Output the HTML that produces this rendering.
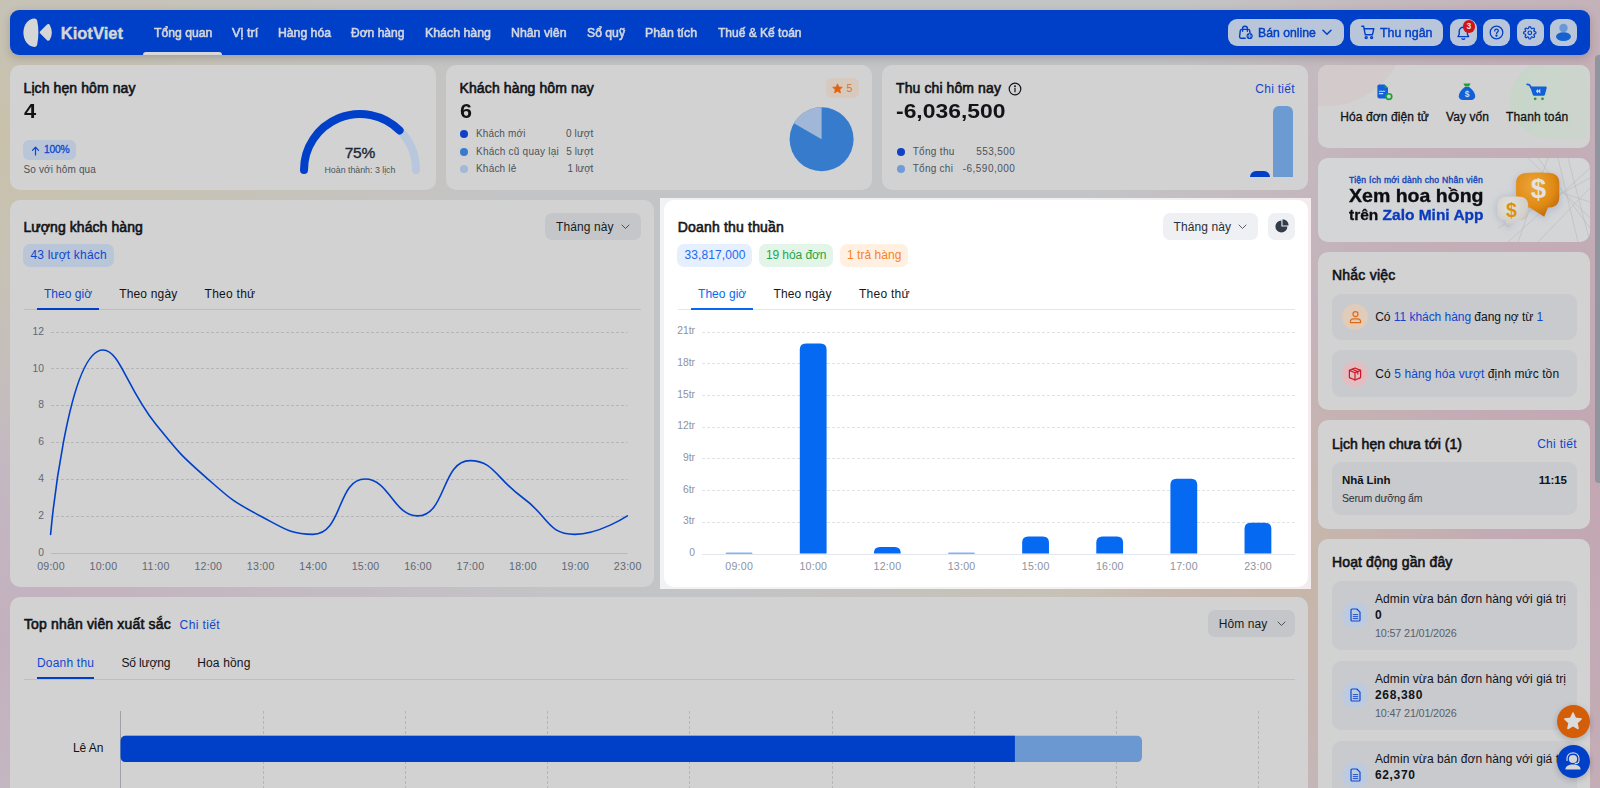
<!DOCTYPE html>
<html lang="vi"><head><meta charset="utf-8"><title>KiotViet - Tổng quan</title>
<style>
html,body{margin:0;padding:0}
body{width:1600px;height:788px;overflow:hidden;position:relative;font-family:"Liberation Sans", sans-serif;background:radial-gradient(ellipse 200px 260px at 1290px 570px,#c7b7a8 0%,rgba(199,183,168,0) 100%),radial-gradient(ellipse 520px 330px at 0px 140px,#c9c1ab 0%,rgba(201,193,171,0) 100%),radial-gradient(ellipse 560px 420px at 0px 640px,#c3b0be 0%,rgba(195,176,190,0) 100%),radial-gradient(ellipse 560px 800px at 1640px 480px,#c2a6b1 0%,#c4b0b8 55%,rgba(196,176,184,0) 100%),radial-gradient(ellipse 420px 200px at 1150px 620px,#c8c0b0 0%,rgba(200,192,176,0) 100%),#c3c4c6;}
.t{position:absolute;white-space:nowrap;display:block}
svg{position:absolute;overflow:visible}
b{font-weight:700}

</style></head><body>
<div style="position:absolute;left:10px;top:10px;width:1580px;height:45px;background:#0040c8;border-radius:9px;box-shadow:0 3px 8px rgba(40,40,60,.22)"></div>
<svg style="left:23px;top:18px" width="30" height="29" viewBox="0 0 30 29">
<path d="M11.500 .4 C5 .4 .4 7 .4 14.600 C.4 22.300 5 28.900 11.500 28.900 C13 28.900 13.800 28 14.200 26.500 C15.800 19 15.800 10 14.200 2.800 C13.800 1.300 13 .4 11.500 .4 Z" fill="#d6d6d6"/>
<path d="M17.300 13.200 L24 6.600 C25 5.600 26.400 5.900 26.900 7.200 C29.500 12 29.500 17 26.900 21.600 C26.400 22.900 25 23.200 24 22.200 L17.300 15.600 C16.600 14.900 16.600 13.900 17.300 13.200 Z" fill="#d6d6d6"/>
</svg>
<span class="t" style="left:60.70px;top:24.63px;font-size:16.5px;line-height:16.5px;color:#d6d6d6;font-weight:700;letter-spacing:0.032px;-webkit-text-stroke:0.4px #d6d6d6;">KiotViet</span>
<span class="t" style="left:153.75px;top:26.00px;font-size:13px;line-height:13px;color:#d6d6d6;transform:scaleX(0.9369);transform-origin:left center;-webkit-text-stroke:0.6px #d6d6d6;">Tổng quan</span>
<span class="t" style="left:232.00px;top:26.00px;font-size:13px;line-height:13px;color:#d3d6de;transform:scaleX(0.9819);transform-origin:left center;-webkit-text-stroke:0.6px #d3d6de;">Vị trí</span>
<span class="t" style="left:278.25px;top:26.00px;font-size:13px;line-height:13px;color:#d3d6de;transform:scaleX(0.9399);transform-origin:left center;-webkit-text-stroke:0.6px #d3d6de;">Hàng hóa</span>
<span class="t" style="left:350.75px;top:26.00px;font-size:13px;line-height:13px;color:#d3d6de;transform:scaleX(0.9274);transform-origin:left center;-webkit-text-stroke:0.6px #d3d6de;">Đơn hàng</span>
<span class="t" style="left:424.50px;top:26.00px;font-size:13px;line-height:13px;color:#d3d6de;transform:scaleX(0.9509);transform-origin:left center;-webkit-text-stroke:0.6px #d3d6de;">Khách hàng</span>
<span class="t" style="left:510.75px;top:26.00px;font-size:13px;line-height:13px;color:#d3d6de;transform:scaleX(0.9480);transform-origin:left center;-webkit-text-stroke:0.6px #d3d6de;">Nhân viên</span>
<span class="t" style="left:586.50px;top:26.00px;font-size:13px;line-height:13px;color:#d3d6de;transform:scaleX(0.9386);transform-origin:left center;-webkit-text-stroke:0.6px #d3d6de;">Sổ quỹ</span>
<span class="t" style="left:645.00px;top:26.00px;font-size:13px;line-height:13px;color:#d3d6de;transform:scaleX(0.9465);transform-origin:left center;-webkit-text-stroke:0.6px #d3d6de;">Phân tích</span>
<span class="t" style="left:717.50px;top:26.00px;font-size:13px;line-height:13px;color:#d3d6de;transform:scaleX(0.9242);transform-origin:left center;-webkit-text-stroke:0.6px #d3d6de;">Thuế &amp; Kế toán</span>
<div style="position:absolute;left:143px;top:52px;width:79px;height:3px;background:#d8d8d8;border-radius:3px 3px 0 0"></div>
<div style="position:absolute;left:1228px;top:19px;width:115.5px;height:27px;background:#b9c5d8;border-radius:9px;"></div>
<div style="position:absolute;left:1350px;top:19px;width:93px;height:27px;background:#b9c5d8;border-radius:9px;"></div>
<div style="position:absolute;left:1450px;top:19px;width:27px;height:27px;background:#b9c5d8;border-radius:9px;"></div>
<div style="position:absolute;left:1483px;top:19px;width:27px;height:27px;background:#b9c5d8;border-radius:9px;"></div>
<div style="position:absolute;left:1516.5px;top:19px;width:27px;height:27px;background:#b9c5d8;border-radius:9px;"></div>
<div style="position:absolute;left:1550px;top:19px;width:27px;height:27px;background:#b9c5d8;border-radius:9px;"></div>
<svg style="left:1238px;top:25px" width="16" height="15" viewBox="0 0 16 15" fill="none" stroke="#0040c8" stroke-width="1.4" stroke-linecap="round" stroke-linejoin="round">
<path d="M7.2 13.2 H3.2 C2.2 13.2 1.500 12.400 1.600 11.400 L2.300 5.600 C2.400 4.900 3 4.400 3.700 4.400 H10.300 C11 4.400 11.600 4.900 11.700 5.600 L12 7.600"/>
<path d="M4.600 6.200 V3.600 C4.600 2.200 5.700 1.200 7 1.200 C8.300 1.200 9.400 2.200 9.400 3.600 V6.200"/>
<circle cx="11.6" cy="11" r="3.1" fill="#0040c8" stroke="none"/>
<path d="M9.7 11 H13.5 M11.6 9.1 C10.800 10.300 10.800 11.700 11.600 12.900 C12.400 11.700 12.400 10.300 11.600 9.100" stroke="#b9c5d8" stroke-width=".7"/>
</svg>
<span class="t" style="left:1258.00px;top:26.00px;font-size:13px;line-height:13px;color:#0040c8;transform:scaleX(0.9397);transform-origin:left center;-webkit-text-stroke:0.45px #0040c8;">Bán online</span>
<svg style="left:1322px;top:29px" width="10" height="7" viewBox="0 0 10 7" fill="none" stroke="#0040c8" stroke-width="1.5" stroke-linecap="round" stroke-linejoin="round"><path d="M1 1.300 L5 5.300 L9 1.300"/></svg>
<svg style="left:1361px;top:25px" width="15" height="15" viewBox="0 0 15 15" fill="none" stroke="#0040c8" stroke-width="1.4" stroke-linecap="round" stroke-linejoin="round">
<path d="M0.8 1.200 H2.600 L4.300 9.800 H11.400 L12.800 3.800 H3.200"/><circle cx="5.2" cy="12.6" r="1" /><circle cx="10.6" cy="12.6" r="1"/></svg>
<span class="t" style="left:1380.00px;top:26.00px;font-size:13px;line-height:13px;color:#0040c8;transform:scaleX(0.9556);transform-origin:left center;-webkit-text-stroke:0.45px #0040c8;">Thu ngân</span>
<svg style="left:1456px;top:25px" width="15" height="16" viewBox="0 0 15 16" fill="none" stroke="#0040c8" stroke-width="1.4" stroke-linecap="round" stroke-linejoin="round">
<path d="M3.2 6.500 C3.200 4 5 2.200 7.300 2.200 C9.600 2.200 11.400 4 11.400 6.500 V9.200 L12.600 11.600 H2 L3.200 9.200 Z"/><path d="M6 13.800 C6.600 14.500 8 14.500 8.600 13.800"/></svg>
<div style="position:absolute;left:1462.500px;top:20px;width:12.500px;height:12.500px;border-radius:50%;background:#d0121b"></div>
<span class="t" style="left:1466.53px;top:22.20px;font-size:8.5px;line-height:8.5px;color:#e4e4e4;font-weight:700;">3</span>
<svg style="left:1489px;top:25px" width="15" height="15" viewBox="0 0 15 15" fill="none" stroke="#0040c8" stroke-width="1.3" stroke-linecap="round" stroke-linejoin="round">
<circle cx="7.5" cy="7.5" r="6.3"/><path d="M5.700 5.900 C5.700 4.800 6.500 4.200 7.500 4.200 C8.500 4.200 9.300 4.900 9.300 5.800 C9.300 7.100 7.500 7.200 7.500 8.600"/><circle cx="7.5" cy="10.7" r=".5" fill="#0040c8"/></svg>
<svg style="left:1523.200px;top:25.700px" width="13.600" height="13.600" viewBox="0 0 24 24" fill="none" stroke="#0040c8" stroke-width="2.1" stroke-linecap="round" stroke-linejoin="round">
<circle cx="12" cy="12" r="3.2"/><path d="M19.4 15a1.650 1.650 0 0 0 .33 1.820l.06.06a2 2 0 1 1-2.830 2.830l-.06-.06a1.650 1.650 0 0 0-1.820-.33 1.650 1.650 0 0 0-1 1.510V21a2 2 0 1 1-4 0v-.09A1.650 1.650 0 0 0 9 19.400a1.650 1.650 0 0 0-1.820.33l-.06.06a2 2 0 1 1-2.830-2.830l.06-.06a1.650 1.650 0 0 0 .33-1.820 1.650 1.650 0 0 0-1.510-1H3a2 2 0 1 1 0-4h.09A1.650 1.650 0 0 0 4.600 9a1.650 1.650 0 0 0-.33-1.820l-.06-.06a2 2 0 1 1 2.830-2.830l.06.06a1.650 1.650 0 0 0 1.820.33H9a1.650 1.650 0 0 0 1-1.510V3a2 2 0 1 1 4 0v.09a1.650 1.650 0 0 0 1 1.510 1.650 1.650 0 0 0 1.820-.33l.06-.06a2 2 0 1 1 2.830 2.830l-.06.06a1.650 1.650 0 0 0-.33 1.820V9a1.650 1.650 0 0 0 1.510 1H21a2 2 0 1 1 0 4h-.09a1.650 1.650 0 0 0-1.510 1z"/></svg>
<svg style="left:1555px;top:22px" width="17" height="20" viewBox="0 0 17 20"><circle cx="8.500" cy="6" r="4.200" fill="#6a97d6"/><ellipse cx="8.500" cy="14.600" rx="7.500" ry="4.300" fill="#1462d2"/></svg>
<div style="position:absolute;left:1595px;top:55px;width:8px;height:428px;background:#8f949e;border-radius:4px"></div>
<div style="position:absolute;left:10px;top:65px;width:426px;height:125px;background:#d2d2d2;border-radius:10px;"></div>
<span class="t" style="left:23.50px;top:81.15px;font-size:14px;line-height:14px;color:#111317;letter-spacing:0.092px;-webkit-text-stroke:0.6px #111317;">Lịch hẹn hôm nay</span>
<span class="t" style="left:23.50px;top:102.49px;font-size:19.5px;line-height:19.5px;color:#111317;transform:scaleX(1.1235);transform-origin:left center;font-weight:700;">4</span>
<div style="position:absolute;left:23px;top:140px;width:53px;height:20px;background:#b9c6d8;border-radius:6px;"></div>
<svg style="left:30.500px;top:145.500px" width="9" height="9.900" viewBox="0 0 10 11" fill="none" stroke="#1046cf" stroke-width="1.35" stroke-linecap="round" stroke-linejoin="round"><path d="M5 10 V1.500 M1.600 4.800 L5 1.400 L8.400 4.800"/></svg>
<span class="t" style="left:44.00px;top:144.98px;font-size:10.3px;line-height:10.3px;color:#1046cf;letter-spacing:-0.211px;-webkit-text-stroke:0.3px #1046cf;">100%</span>
<span class="t" style="left:23.50px;top:165.44px;font-size:10px;line-height:10px;color:#4c525b;letter-spacing:0.144px;">So với hôm qua</span>
<svg style="left:0;top:0" width="1600" height="788" viewBox="0 0 1600 788" fill="none" stroke-linecap="round">
<path d="M304 170 A56 56 0 0 1 416 170" stroke="#b9c7dc" stroke-width="8"/>
<path d="M304 170 A56 56 0 0 1 399.60 130.40" stroke="#0040c8" stroke-width="8"/></svg>
<span class="t" style="left:344.66px;top:145.08px;font-size:15.5px;line-height:15.5px;color:#1c2633;letter-spacing:-0.177px;-webkit-text-stroke:.35px #1c2633;">75%</span>
<span class="t" style="left:324.50px;top:165.85px;font-size:8.8px;line-height:8.8px;color:#4c525b;">Hoàn thành: 3 lịch</span>
<div style="position:absolute;left:446px;top:65px;width:426px;height:125px;background:#d2d2d2;border-radius:10px;"></div>
<span class="t" style="left:459.50px;top:81.15px;font-size:14px;line-height:14px;color:#111317;letter-spacing:0.121px;-webkit-text-stroke:0.6px #111317;">Khách hàng hôm nay</span>
<span class="t" style="left:459.50px;top:102.49px;font-size:19.5px;line-height:19.5px;color:#111317;transform:scaleX(1.1050);transform-origin:left center;font-weight:700;">6</span>
<div style="position:absolute;left:460.200px;top:130.2px;width:8px;height:8px;border-radius:50%;background:#0f40c8"></div>
<span class="t" style="left:476.00px;top:129.33px;font-size:10px;line-height:10px;color:#4c525b;letter-spacing:0.139px;">Khách mới</span>
<span class="t" style="left:565.95px;top:129.33px;font-size:10px;line-height:10px;color:#4c525b;letter-spacing:0.151px;">0 lượt</span>
<div style="position:absolute;left:460.200px;top:147.7px;width:8px;height:8px;border-radius:50%;background:#387bcf"></div>
<span class="t" style="left:476.00px;top:146.83px;font-size:10px;line-height:10px;color:#4c525b;letter-spacing:0.238px;">Khách cũ quay lại</span>
<span class="t" style="left:566.37px;top:146.83px;font-size:10px;line-height:10px;color:#4c525b;letter-spacing:0.068px;">5 lượt</span>
<div style="position:absolute;left:460.200px;top:165.1px;width:8px;height:8px;border-radius:50%;background:#a3b9d8"></div>
<span class="t" style="left:476.00px;top:164.23px;font-size:10px;line-height:10px;color:#4c525b;letter-spacing:0.197px;">Khách lẻ</span>
<span class="t" style="left:567.62px;top:164.23px;font-size:10px;line-height:10px;color:#4c525b;letter-spacing:-0.182px;">1 lượt</span>
<svg style="left:0;top:0" width="1600" height="788" viewBox="0 0 1600 788"><circle cx="821.6" cy="139.3" r="32" fill="#377bcc"/>
<path d="M821.6 139.3 L793.89 123.30 A32 32 0 0 1 821.6 107.30000000000001 Z" fill="#a0b7d7"/></svg>
<div style="position:absolute;left:826px;top:78px;width:33px;height:20px;background:#d7c9bd;border-radius:6px;"></div>
<svg style="left:831.500px;top:83px" width="11" height="11" viewBox="0 0 24 24"><path d="M12 1.800 L15.100 8.600 L22.500 9.400 L17 14.400 L18.600 21.700 L12 18 L5.400 21.700 L7 14.400 L1.500 9.400 L8.900 8.600 Z" fill="#e2630f" stroke="#e2630f" stroke-width="1.5" stroke-linejoin="round"/></svg>
<span class="t" style="left:846.50px;top:83.31px;font-size:10.5px;line-height:10.5px;color:#d8742a;">5</span>
<div style="position:absolute;left:882px;top:65px;width:426px;height:125px;background:#d2d2d2;border-radius:10px;"></div>
<span class="t" style="left:896.00px;top:81.15px;font-size:14px;line-height:14px;color:#111317;letter-spacing:0.100px;-webkit-text-stroke:0.6px #111317;">Thu chi hôm nay</span>
<svg style="left:1008px;top:81.500px" width="14" height="14" viewBox="0 0 14 14" fill="none" stroke="#111317" stroke-width="1.200" stroke-linecap="round"><circle cx="7" cy="7" r="5.800"/><path d="M7 6.400 V9.800"/><circle cx="7" cy="4.300" r=".4" fill="#111317"/></svg>
<span class="t" style="left:1255.28px;top:83.04px;font-size:12px;line-height:12px;color:#1046cf;letter-spacing:0.280px;">Chi tiết</span>
<span class="t" style="left:896.00px;top:102.49px;font-size:19.5px;line-height:19.5px;color:#111317;transform:scaleX(1.1743);transform-origin:left center;font-weight:700;">-6,036,500</span>
<div style="position:absolute;left:897px;top:147.7px;width:8px;height:8px;border-radius:50%;background:#0f40c8"></div>
<span class="t" style="left:912.70px;top:146.83px;font-size:10px;line-height:10px;color:#4c525b;letter-spacing:0.314px;">Tổng thu</span>
<span class="t" style="left:976.21px;top:146.83px;font-size:10px;line-height:10px;color:#4c525b;letter-spacing:0.406px;">553,500</span>
<div style="position:absolute;left:897px;top:165.1px;width:8px;height:8px;border-radius:50%;background:#6f9cd6"></div>
<span class="t" style="left:912.70px;top:164.23px;font-size:10px;line-height:10px;color:#4c525b;letter-spacing:0.268px;">Tổng chi</span>
<span class="t" style="left:962.77px;top:164.23px;font-size:10px;line-height:10px;color:#4c525b;letter-spacing:0.467px;">-6,590,000</span>
<div style="position:absolute;left:1249.6px;top:170.5px;width:20.4px;height:6.2px;background:#0040c8;border-radius:0px;border-radius:6px 6px 0 0"></div>
<div style="position:absolute;left:1273px;top:105.8px;width:20.3px;height:70.9px;background:#6b9bd2;border-radius:0px;border-radius:6px 6px 0 0"></div>
<div style="position:absolute;left:1318px;top:65px;width:272px;height:83px;background:#d2d2d2;border-radius:10px;overflow:hidden">
<div style="position:absolute;left:-62px;top:-96px;width:150px;height:136px;border-radius:50%;background:#d3cacc;transform:rotate(-25deg)"></div>
<div style="position:absolute;left:192px;top:-6px;width:130px;height:79.500px;border-radius:44px 0 0 40px/42px 0 0 38px;background:linear-gradient(90deg,#c7d6c9 0%,#cbd5cc 40%,rgba(210,210,210,0) 92%)"></div>
</div>
<svg style="left:1375.500px;top:83.500px" width="18" height="17" viewBox="0 0 18 17">
<path d="M1.400 2.300 C1.400 1.300 2.200 .5 3.200 .5 H8.500 L12 4 V12.600 C12 13.600 11.200 14.400 10.200 14.400 H3.200 C2.200 14.400 1.400 13.600 1.400 12.600 Z" fill="#1260d8"/>
<path d="M8.500 .5 L12 4 H9.700 C9 4 8.500 3.500 8.500 2.800 Z" fill="#19a23b"/>
<path d="M3.400 7.300 H8.600 M3.400 9.600 H6.800" stroke="#cfd6e4" stroke-width="1.100" stroke-linecap="round"/>
<circle cx="12.900" cy="12.600" r="3.700" fill="#19a23b"/><circle cx="12.900" cy="12.600" r="2" fill="#bcd8c0"/></svg>
<svg style="left:1458px;top:83px" width="18" height="18" viewBox="0 0 18 18">
<path d="M5.300 .6 H12.700 L10.900 3.600 H7.100 Z" fill="#19a23b"/>
<path d="M6.800 4.100 H11.200 C14.200 6.400 17.200 10.200 17.200 13.200 C17.200 15.600 15.400 16.900 13 16.900 H5 C2.600 16.900 .8 15.600 .8 13.200 C.8 10.200 3.800 6.400 6.800 4.100 Z" fill="#1260d8"/>
<text x="9" y="14.300" font-family="Liberation Sans, sans-serif" font-size="8.500" font-weight="700" fill="#d6dbe6" text-anchor="middle">$</text></svg>
<svg style="left:1526px;top:83px" width="22" height="18" viewBox="0 0 22 18">
<path d="M1.200 1.300 C3 1.300 3.800 1.600 4.300 3 L4.800 4.400" stroke="#1260d8" stroke-width="1.800" fill="none" stroke-linecap="round"/>
<path d="M4 3.600 H19.600 C20.400 3.600 20.900 4.300 20.700 5 L19 11.400 C18.800 12.200 18.100 12.700 17.300 12.700 H8.400 C7.600 12.700 6.900 12.200 6.700 11.400 Z" fill="#1260d8"/>
<path d="M14.300 5.800 L11.600 8.200 L14.300 10.600 Z M12 5.800 L9.900 8.200 L12 10.600" fill="#d6dbe6"/>
<circle cx="9.200" cy="15.800" r="1.400" fill="#19a23b"/><circle cx="16.500" cy="15.800" r="1.400" fill="#19a23b"/></svg>
<span class="t" style="left:1340.30px;top:111.04px;font-size:12px;line-height:12px;color:#111317;letter-spacing:0.094px;-webkit-text-stroke:.3px #111317;">Hóa đơn điện tử</span>
<span class="t" style="left:1446.00px;top:111.04px;font-size:12px;line-height:12px;color:#111317;letter-spacing:0.076px;-webkit-text-stroke:.3px #111317;">Vay vốn</span>
<span class="t" style="left:1506.00px;top:111.04px;font-size:12px;line-height:12px;color:#111317;letter-spacing:0.158px;-webkit-text-stroke:.3px #111317;">Thanh toán</span>
<div style="position:absolute;left:1318px;top:158px;width:272px;height:84px;background:#d4d5d7;border-radius:10px;overflow:hidden">
<svg style="left:180px;top:0" width="92" height="84" viewBox="0 0 92 84" fill="none" stroke="#b9bbbf" stroke-width=".6">
<path d="M30 0 L92 60 M50 0 L20 84 M92 10 L10 84 M70 0 L92 84 M92 30 L40 84 M20 20 L92 44 M60 0 L80 84 M0 70 L92 20 M40 0 L92 70"/></svg>
</div>
<span class="t" style="left:1349.00px;top:176.22px;font-size:8.6px;line-height:8.6px;color:#1a4ab8;letter-spacing:0.252px;-webkit-text-stroke:.4px #1a4ab8;">Tiện ích mới dành cho Nhân viên</span>
<span class="t" style="left:1349.00px;top:187.36px;font-size:18.6px;line-height:18.6px;color:#0b0d12;transform:scaleX(1.0499);transform-origin:left center;font-weight:700;-webkit-text-stroke:.35px #0b0d12;">Xem hoa hồng</span>
<span class="t" style="left:1349.00px;top:208.14px;font-size:14.6px;line-height:14.6px;color:#0b0d12;transform:scaleX(1.0611);transform-origin:left center;font-weight:700;-webkit-text-stroke:.3px;">trên <span style="color:#0a3bbd">Zalo Mini App</span></span>
<svg style="left:1490px;top:166px" width="80" height="70" viewBox="0 0 80 70">
<defs><radialGradient id="og" cx=".4" cy=".3" r=".8"><stop offset="0" stop-color="#eba63a"/><stop offset=".6" stop-color="#e08a14"/><stop offset="1" stop-color="#b5640a"/></radialGradient>
<radialGradient id="wg" cx=".4" cy=".3" r=".8"><stop offset="0" stop-color="#e3e1dd"/><stop offset=".7" stop-color="#d2cfca"/><stop offset="1" stop-color="#a9a6a2"/></radialGradient>
<filter id="bl" x="-30%" y="-30%" width="160%" height="160%"><feGaussianBlur stdDeviation="3.5"/></filter></defs>
<path d="M34 9 H61 C67 9 70 13 70 19 V36 C70 41 67 44 62 44 H58 L55 54 L42 44 H30 L18 64 L14 56 C8 54 6 50 6 45 V41 C6 35 10 31 16 30 H25 V19 C25 13 28 9 34 9 Z" fill="#a9b4cc" opacity=".75" filter="url(#bl)"/>
<path d="M36 7 C43 6.300 53 6.300 60 7 C66 7.600 69.300 11 69.300 17 V31 C69.300 37.500 66 41 60 41.500 L58 41.600 L54.200 50.700 L39.600 41.600 L36 41.500 C30 41 26.100 37.500 26.100 31 V17 C26.100 11 30 7.600 36 7 Z" fill="url(#og)"/>
<path d="M15 30.800 C20 30.400 26 30.400 30.500 30.800 C35.500 31.300 38.200 34.500 38.200 39 V46.500 C38.200 51 35.500 54 30.500 54.300 L26.700 54.400 L17.500 61.400 L15.400 54.400 L15 54.300 C10 54 7.300 51 7.300 46.500 V39 C7.300 34.500 10 31.300 15 30.800 Z" fill="url(#wg)"/>
<text x="48.300" y="32" font-family="Liberation Sans, sans-serif" font-size="27.500" font-weight="700" fill="#e4e2de" text-anchor="middle">$</text>
<text x="21.500" y="50.600" font-family="Liberation Sans, sans-serif" font-size="19.500" font-weight="700" fill="#dc930c" text-anchor="middle">$</text>
</svg>
<div style="position:absolute;left:1318px;top:252px;width:272px;height:158px;background:#d2d2d2;border-radius:10px;"></div>
<span class="t" style="left:1332.00px;top:268.35px;font-size:14px;line-height:14px;color:#111317;letter-spacing:0.226px;-webkit-text-stroke:0.6px #111317;">Nhắc việc</span>
<div style="position:absolute;left:1331.6px;top:294px;width:245.4px;height:46px;background:#c8cace;border-radius:9px;"></div>
<div style="position:absolute;left:1331.6px;top:350px;width:245.4px;height:46.5px;background:#c8cace;border-radius:9px;"></div>
<div style="position:absolute;left:1342px;top:304px;width:26px;height:26px;border-radius:50%;background:#e0ccb9"></div>
<div style="position:absolute;left:1342px;top:360.500px;width:26px;height:26px;border-radius:50%;background:#e3bdc1"></div>
<svg style="left:1348.500px;top:310px" width="13" height="14" viewBox="0 0 13 14" fill="none" stroke="#e06b15" stroke-width="1.250" stroke-linecap="round" stroke-linejoin="round">
<circle cx="6.500" cy="4" r="2.500"/><path d="M1.400 12.600 V11.800 C1.400 10 2.800 8.800 4.600 8.800 H8.400 C10.200 8.800 11.600 10 11.600 11.800 V12.600 Z"/></svg>
<svg style="left:1348px;top:366.500px" width="14" height="14" viewBox="0 0 14 14" fill="none" stroke="#d01622" stroke-width="1.200" stroke-linecap="round" stroke-linejoin="round">
<path d="M7 1 L12.600 3.400 V10.600 L7 13 L1.400 10.600 V3.400 Z"/><path d="M1.400 3.400 L7 5.800 L12.600 3.400 M7 5.800 V13 M4.200 2.200 L9.800 4.600 V7"/></svg>
<span class="t" style="left:1375.20px;top:311.04px;font-size:12px;line-height:12px;color:#111317;letter-spacing:-0.040px;">Có <span style="color:#1046cf">11 khách hàng</span> đang nợ từ <span style="color:#1046cf">1</span></span>
<span class="t" style="left:1375.20px;top:367.54px;font-size:12px;line-height:12px;color:#111317;letter-spacing:0.105px;">Có <span style="color:#1046cf">5 hàng hóa vượt</span> định mức tồn</span>
<div style="position:absolute;left:1318px;top:420px;width:272px;height:108.7px;background:#d2d2d2;border-radius:10px;"></div>
<span class="t" style="left:1332.00px;top:436.95px;font-size:14px;line-height:14px;color:#111317;letter-spacing:0.007px;-webkit-text-stroke:0.6px #111317;">Lịch hẹn chưa tới (1)</span>
<span class="t" style="left:1537.18px;top:437.64px;font-size:12px;line-height:12px;color:#1046cf;letter-spacing:0.280px;">Chi tiết</span>
<div style="position:absolute;left:1331.6px;top:462.2px;width:245.4px;height:53.2px;background:#c8cace;border-radius:9px;"></div>
<span class="t" style="left:1342.00px;top:474.67px;font-size:11.5px;line-height:11.5px;color:#111317;font-weight:700;letter-spacing:-0.088px;">Nhã Linh</span>
<span class="t" style="left:1538.80px;top:474.67px;font-size:11.5px;line-height:11.5px;color:#111317;font-weight:700;letter-spacing:-0.196px;">11:15</span>
<span class="t" style="left:1342.00px;top:493.31px;font-size:10.5px;line-height:10.5px;color:#2d3138;letter-spacing:-0.177px;">Serum dưỡng ẩm</span>
<div style="position:absolute;left:1318px;top:539px;width:272px;height:260px;background:#d2d2d2;border-radius:10px 10px 0 0"></div>
<span class="t" style="left:1332.00px;top:554.85px;font-size:14px;line-height:14px;color:#111317;letter-spacing:0.128px;-webkit-text-stroke:0.6px #111317;">Hoạt động gần đây</span>
<div style="position:absolute;left:1331.6px;top:580.5px;width:245.4px;height:69.8px;background:#c8cace;border-radius:9px;"></div>
<div style="position:absolute;left:1342px;top:602.1px;width:26px;height:26px;border-radius:50%;background:#bccbe0"></div>
<svg style="left:1349.500px;top:608.1px" width="11" height="14" viewBox="0 0 11 14" fill="none" stroke="#1046cf" stroke-width="1.200" stroke-linejoin="round" stroke-linecap="round">
<path d="M1 2 C1 1.400 1.400 1 2 1 H6.800 L10 4.200 V12 C10 12.600 9.600 13 9 13 H2 C1.400 13 1 12.600 1 12 Z"/><path d="M3.200 6.600 H7.800 M3.200 8.600 H7.800 M3.200 10.600 H7.800" stroke-width=".9"/></svg>
<span class="t" style="left:1375.00px;top:592.54px;font-size:12px;line-height:12px;color:#111317;letter-spacing:0.072px;">Admin vừa bán đơn hàng với giá trị</span>
<span class="t" style="left:1375.00px;top:609.14px;font-size:12px;line-height:12px;color:#111317;font-weight:700;letter-spacing:0.812px;">0</span>
<span class="t" style="left:1375.00px;top:627.76px;font-size:10.8px;line-height:10.8px;color:#5a606a;letter-spacing:-0.160px;">10:57 21/01/2026</span>
<div style="position:absolute;left:1331.6px;top:660.6px;width:245.4px;height:69.8px;background:#c8cace;border-radius:9px;"></div>
<div style="position:absolute;left:1342px;top:682.2px;width:26px;height:26px;border-radius:50%;background:#bccbe0"></div>
<svg style="left:1349.500px;top:688.2px" width="11" height="14" viewBox="0 0 11 14" fill="none" stroke="#1046cf" stroke-width="1.200" stroke-linejoin="round" stroke-linecap="round">
<path d="M1 2 C1 1.400 1.400 1 2 1 H6.800 L10 4.200 V12 C10 12.600 9.600 13 9 13 H2 C1.400 13 1 12.600 1 12 Z"/><path d="M3.200 6.600 H7.800 M3.200 8.600 H7.800 M3.200 10.600 H7.800" stroke-width=".9"/></svg>
<span class="t" style="left:1375.00px;top:672.64px;font-size:12px;line-height:12px;color:#111317;letter-spacing:0.072px;">Admin vừa bán đơn hàng với giá trị</span>
<span class="t" style="left:1375.00px;top:689.24px;font-size:12px;line-height:12px;color:#111317;font-weight:700;letter-spacing:0.658px;">268,380</span>
<span class="t" style="left:1375.00px;top:707.86px;font-size:10.8px;line-height:10.8px;color:#5a606a;letter-spacing:-0.160px;">10:47 21/01/2026</span>
<div style="position:absolute;left:1331.6px;top:740.7px;width:245.4px;height:69.8px;background:#c8cace;border-radius:9px;"></div>
<div style="position:absolute;left:1342px;top:762.3px;width:26px;height:26px;border-radius:50%;background:#bccbe0"></div>
<svg style="left:1349.500px;top:768.3px" width="11" height="14" viewBox="0 0 11 14" fill="none" stroke="#1046cf" stroke-width="1.200" stroke-linejoin="round" stroke-linecap="round">
<path d="M1 2 C1 1.400 1.400 1 2 1 H6.800 L10 4.200 V12 C10 12.600 9.600 13 9 13 H2 C1.400 13 1 12.600 1 12 Z"/><path d="M3.200 6.600 H7.800 M3.200 8.600 H7.800 M3.200 10.600 H7.800" stroke-width=".9"/></svg>
<span class="t" style="left:1375.00px;top:752.74px;font-size:12px;line-height:12px;color:#111317;letter-spacing:0.072px;">Admin vừa bán đơn hàng với giá trị</span>
<span class="t" style="left:1375.00px;top:769.34px;font-size:12px;line-height:12px;color:#111317;font-weight:700;letter-spacing:0.633px;">62,370</span>
<span class="t" style="left:1375.00px;top:787.96px;font-size:10.8px;line-height:10.8px;color:#5a606a;letter-spacing:-0.160px;">10:40 21/01/2026</span>
<div style="position:absolute;left:1556.500px;top:704.800px;width:33px;height:33px;border-radius:50%;background:#d45d08;box-shadow:0 2px 6px rgba(0,0,0,.2)"></div>
<svg style="left:1563px;top:711px" width="20" height="20" viewBox="0 0 24 24"><path d="M12 2.400 L14.900 8.700 L21.800 9.500 L16.700 14.200 L18.100 21 L12 17.600 L5.900 21 L7.300 14.200 L2.200 9.500 L9.100 8.700 Z" fill="#dcdcdc" stroke="#dcdcdc" stroke-width="1.800" stroke-linejoin="round"/></svg>
<div style="position:absolute;left:1556.500px;top:745px;width:33px;height:33px;border-radius:50%;background:#0040c8;box-shadow:0 2px 6px rgba(0,0,0,.2)"></div>
<svg style="left:1563px;top:751px" width="20" height="21" viewBox="0 0 20 21" fill="none">
<circle cx="10" cy="8" r="4.100" fill="#d6d6d6"/><path d="M2.400 18.600 C2.400 15 5.600 13.400 10 13.400 C14.400 13.400 17.600 15 17.600 18.600 Z" fill="#d6d6d6"/>
<path d="M4 9.500 V7.600 C4 4.200 6.600 1.800 10 1.800 C13.400 1.800 16 4.200 16 7.600 V9.500 C16 11.600 14.200 12.600 12.200 12.600" stroke="#d6d6d6" stroke-width="1.200" stroke-linecap="round"/></svg>
<div style="position:absolute;left:10px;top:200px;width:644px;height:387px;background:#d2d2d2;border-radius:10px;"></div>
<span class="t" style="left:23.50px;top:220.45px;font-size:14px;line-height:14px;color:#111317;letter-spacing:0.075px;-webkit-text-stroke:0.6px #111317;">Lượng khách hàng</span>
<div style="position:absolute;left:23.3px;top:243.6px;width:90.6px;height:23px;background:#b9c6d8;border-radius:7px;"></div>
<span class="t" style="left:30.50px;top:249.04px;font-size:12px;line-height:12px;color:#1046cf;letter-spacing:0.181px;">43 lượt khách</span>
<div style="position:absolute;left:545px;top:213px;width:96px;height:27px;background:#c4c6ca;border-radius:7px;"></div>
<span class="t" style="left:556.00px;top:221.34px;font-size:12px;line-height:12px;color:#181b20;letter-spacing:0.087px;">Tháng này</span>
<svg style="left:620.500px;top:224px" width="9" height="6" viewBox="0 0 9 6" fill="none" stroke="#4a5059" stroke-width="1" stroke-linecap="round" stroke-linejoin="round"><path d="M1 1 L4.500 4.500 L8 1"/></svg>
<span class="t" style="left:43.90px;top:287.74px;font-size:12px;line-height:12px;color:#1046cf;letter-spacing:0.049px;">Theo giờ</span>
<span class="t" style="left:119.20px;top:287.74px;font-size:12px;line-height:12px;color:#111317;letter-spacing:0.165px;">Theo ngày</span>
<span class="t" style="left:204.60px;top:287.74px;font-size:12px;line-height:12px;color:#111317;letter-spacing:0.258px;">Theo thứ</span>
<div style="position:absolute;left:23.5px;top:309px;width:617.5px;height:1px;background:#bdbfc3;border-radius:0px;"></div>
<div style="position:absolute;left:36.7px;top:308px;width:62.3px;height:2px;background:#0040c8;border-radius:0px;"></div>
<svg style="left:0;top:0" width="1600" height="788" viewBox="0 0 1600 788" fill="none"><path d="M51 516.5 H627.500" stroke="#b4b6ba" stroke-width="1" stroke-dasharray="3 2"/><path d="M51 479.5 H627.500" stroke="#b4b6ba" stroke-width="1" stroke-dasharray="3 2"/><path d="M51 442.5 H627.500" stroke="#b4b6ba" stroke-width="1" stroke-dasharray="3 2"/><path d="M51 405.5 H627.500" stroke="#b4b6ba" stroke-width="1" stroke-dasharray="3 2"/><path d="M51 368.5 H627.500" stroke="#b4b6ba" stroke-width="1" stroke-dasharray="3 2"/><path d="M51 332.5 H627.500" stroke="#b4b6ba" stroke-width="1" stroke-dasharray="3 2"/><path d="M51 553.5 H627.500" stroke="#b7b9bd" stroke-width="1"/><path d="M50.60 534.36 C50.60 534.36 67.41 349.96 103.03 349.96 C119.84 349.96 127.00 388.69 155.46 423.72 C179.43 453.23 179.41 454.00 207.89 479.04 C231.84 500.10 232.24 501.11 260.32 515.92 C284.67 528.77 290.64 534.36 312.75 534.36 C343.07 534.36 336.70 479.04 365.18 479.04 C389.13 479.04 393.66 515.92 417.61 515.92 C446.09 515.92 441.56 460.60 470.04 460.60 C493.99 460.60 496.26 479.04 522.47 497.48 C548.68 515.92 546.82 534.36 574.90 534.36 C599.25 534.36 627.33 515.92 627.33 515.92" stroke="#0040c8" stroke-width="1.600" stroke-linecap="round"/></svg>
<span class="t" style="left:38.17px;top:547.98px;font-size:10.3px;line-height:10.3px;color:#5f6876;">0</span>
<span class="t" style="left:38.17px;top:511.10px;font-size:10.3px;line-height:10.3px;color:#5f6876;">2</span>
<span class="t" style="left:38.17px;top:474.22px;font-size:10.3px;line-height:10.3px;color:#5f6876;">4</span>
<span class="t" style="left:38.17px;top:437.34px;font-size:10.3px;line-height:10.3px;color:#5f6876;">6</span>
<span class="t" style="left:38.17px;top:400.46px;font-size:10.3px;line-height:10.3px;color:#5f6876;">8</span>
<span class="t" style="left:32.43px;top:363.58px;font-size:10.3px;line-height:10.3px;color:#5f6876;">10</span>
<span class="t" style="left:32.43px;top:326.70px;font-size:10.3px;line-height:10.3px;color:#5f6876;">12</span>
<span class="t" style="left:37.13px;top:560.83px;font-size:10.6px;line-height:10.6px;color:#5f6876;letter-spacing:0.257px;">09:00</span>
<span class="t" style="left:89.56px;top:560.83px;font-size:10.6px;line-height:10.6px;color:#5f6876;letter-spacing:0.257px;">10:00</span>
<span class="t" style="left:142.07px;top:560.83px;font-size:10.6px;line-height:10.6px;color:#5f6876;letter-spacing:0.413px;">11:00</span>
<span class="t" style="left:194.42px;top:560.83px;font-size:10.6px;line-height:10.6px;color:#5f6876;letter-spacing:0.257px;">12:00</span>
<span class="t" style="left:246.85px;top:560.83px;font-size:10.6px;line-height:10.6px;color:#5f6876;letter-spacing:0.257px;">13:00</span>
<span class="t" style="left:299.28px;top:560.83px;font-size:10.6px;line-height:10.6px;color:#5f6876;letter-spacing:0.257px;">14:00</span>
<span class="t" style="left:351.71px;top:560.83px;font-size:10.6px;line-height:10.6px;color:#5f6876;letter-spacing:0.257px;">15:00</span>
<span class="t" style="left:404.14px;top:560.83px;font-size:10.6px;line-height:10.6px;color:#5f6876;letter-spacing:0.257px;">16:00</span>
<span class="t" style="left:456.57px;top:560.83px;font-size:10.6px;line-height:10.6px;color:#5f6876;letter-spacing:0.257px;">17:00</span>
<span class="t" style="left:509.00px;top:560.83px;font-size:10.6px;line-height:10.6px;color:#5f6876;letter-spacing:0.257px;">18:00</span>
<span class="t" style="left:561.43px;top:560.83px;font-size:10.6px;line-height:10.6px;color:#5f6876;letter-spacing:0.257px;">19:00</span>
<span class="t" style="left:613.86px;top:560.83px;font-size:10.6px;line-height:10.6px;color:#5f6876;letter-spacing:0.257px;">23:00</span>
<div style="position:absolute;left:660px;top:197.800px;width:650.500px;height:391.700px;background:linear-gradient(90deg,#f1f2f4 0%,#f2f1f2 50%,#f4ecec 100%)"></div>
<div style="position:absolute;left:664px;top:200px;width:644px;height:387px;background:#ffffff;border-radius:10px;"></div>
<span class="t" style="left:677.80px;top:220.45px;font-size:14px;line-height:14px;color:#15181d;letter-spacing:0.178px;-webkit-text-stroke:0.6px #15181d;">Doanh thu thuần</span>
<div style="position:absolute;left:677.4px;top:243.6px;width:75.1px;height:23px;background:#e5effe;border-radius:7px;"></div>
<span class="t" style="left:684.40px;top:249.04px;font-size:12px;line-height:12px;color:#2467ee;letter-spacing:0.114px;">33,817,000</span>
<div style="position:absolute;left:758.9px;top:243.6px;width:74.3px;height:23px;background:#e2f5e8;border-radius:7px;"></div>
<span class="t" style="left:765.90px;top:249.04px;font-size:12px;line-height:12px;color:#1fa54a;letter-spacing:-0.077px;">19 hóa đơn</span>
<div style="position:absolute;left:840px;top:243.6px;width:68.3px;height:23px;background:#fff0e2;border-radius:7px;"></div>
<span class="t" style="left:847.00px;top:249.04px;font-size:12px;line-height:12px;color:#f58426;letter-spacing:0.045px;">1 trả hàng</span>
<div style="position:absolute;left:1162.5px;top:213px;width:95.5px;height:27px;background:#eef0f3;border-radius:7px;"></div>
<span class="t" style="left:1173.50px;top:221.34px;font-size:12px;line-height:12px;color:#2a2f37;letter-spacing:0.087px;">Tháng này</span>
<svg style="left:1238px;top:224px" width="9" height="6" viewBox="0 0 9 6" fill="none" stroke="#5a606a" stroke-width="1" stroke-linecap="round" stroke-linejoin="round"><path d="M1 1 L4.500 4.500 L8 1"/></svg>
<div style="position:absolute;left:1268.4px;top:213px;width:26.8px;height:27px;background:#eef0f3;border-radius:7px;"></div>
<svg style="left:1274.500px;top:219px" width="14" height="14" viewBox="0 0 14 14"><path d="M6.400 1.500 A6 6 0 1 0 12.400 7.500 H6.400 Z" fill="#333c49"/><path d="M7.500 .3 A6.100 6.100 0 0 1 13.600 6.400 H7.500 Z" fill="#333c49"/></svg>
<span class="t" style="left:698.00px;top:287.74px;font-size:12px;line-height:12px;color:#0569f2;letter-spacing:0.049px;">Theo giờ</span>
<span class="t" style="left:773.40px;top:287.74px;font-size:12px;line-height:12px;color:#15181d;letter-spacing:0.165px;">Theo ngày</span>
<span class="t" style="left:859.00px;top:287.74px;font-size:12px;line-height:12px;color:#15181d;letter-spacing:0.258px;">Theo thứ</span>
<div style="position:absolute;left:677.5px;top:309px;width:617.5px;height:1px;background:#e4e6ea;border-radius:0px;"></div>
<div style="position:absolute;left:690.8px;top:308px;width:62.3px;height:2px;background:#0569f2;border-radius:0px;"></div>
<svg style="left:0;top:0" width="1600" height="788" viewBox="0 0 1600 788" fill="none"><path d="M702 522.5 H1295" stroke="#dfe2e7" stroke-width="1" stroke-dasharray="3 2"/><path d="M702 490.5 H1295" stroke="#dfe2e7" stroke-width="1" stroke-dasharray="3 2"/><path d="M702 458.5 H1295" stroke="#dfe2e7" stroke-width="1" stroke-dasharray="3 2"/><path d="M702 427.5 H1295" stroke="#dfe2e7" stroke-width="1" stroke-dasharray="3 2"/><path d="M702 395.5 H1295" stroke="#dfe2e7" stroke-width="1" stroke-dasharray="3 2"/><path d="M702 363.5 H1295" stroke="#dfe2e7" stroke-width="1" stroke-dasharray="3 2"/><path d="M702 332.5 H1295" stroke="#dfe2e7" stroke-width="1" stroke-dasharray="3 2"/><path d="M702 554.5 H1295" stroke="#e3e6ea" stroke-width="1"/><path d="M725.66 553.5 V553.50 Q725.66 552.76 726.40 552.76 H751.72 Q752.46 552.76 752.46 553.50 V553.5 Z" fill="#0569f2"/><path d="M799.79 553.5 V349.47 Q799.79 343.47 805.79 343.47 H820.59 Q826.59 343.47 826.59 349.47 V553.5 Z" fill="#0569f2"/><path d="M873.91 553.5 V552.95 Q873.91 546.95 879.91 546.95 H894.71 Q900.71 546.95 900.71 552.95 V553.5 Z" fill="#0569f2"/><path d="M948.04 553.5 V553.50 Q948.04 552.76 948.78 552.76 H974.10 Q974.84 552.76 974.84 553.50 V553.5 Z" fill="#0569f2"/><path d="M1022.16 553.5 V542.59 Q1022.16 536.59 1028.16 536.59 H1042.96 Q1048.96 536.59 1048.96 542.59 V553.5 Z" fill="#0569f2"/><path d="M1096.29 553.5 V542.59 Q1096.29 536.59 1102.29 536.59 H1117.09 Q1123.09 536.59 1123.09 542.59 V553.5 Z" fill="#0569f2"/><path d="M1170.41 553.5 V484.77 Q1170.41 478.77 1176.41 478.77 H1191.21 Q1197.21 478.77 1197.21 484.77 V553.5 Z" fill="#0569f2"/><path d="M1244.54 553.5 V528.85 Q1244.54 522.85 1250.54 522.85 H1265.34 Q1271.34 522.85 1271.34 528.85 V553.5 Z" fill="#0569f2"/></svg>
<span class="t" style="left:689.27px;top:548.18px;font-size:10.3px;line-height:10.3px;color:#8b93a1;">0</span>
<span class="t" style="left:682.97px;top:516.47px;font-size:10.3px;line-height:10.3px;color:#8b93a1;">3tr</span>
<span class="t" style="left:682.97px;top:484.76px;font-size:10.3px;line-height:10.3px;color:#8b93a1;">6tr</span>
<span class="t" style="left:682.97px;top:453.05px;font-size:10.3px;line-height:10.3px;color:#8b93a1;">9tr</span>
<span class="t" style="left:677.25px;top:421.34px;font-size:10.3px;line-height:10.3px;color:#8b93a1;">12tr</span>
<span class="t" style="left:677.25px;top:389.63px;font-size:10.3px;line-height:10.3px;color:#8b93a1;">15tr</span>
<span class="t" style="left:677.25px;top:357.92px;font-size:10.3px;line-height:10.3px;color:#8b93a1;">18tr</span>
<span class="t" style="left:677.25px;top:326.21px;font-size:10.3px;line-height:10.3px;color:#8b93a1;">21tr</span>
<span class="t" style="left:725.29px;top:561.23px;font-size:10.6px;line-height:10.6px;color:#8b93a1;letter-spacing:0.257px;">09:00</span>
<span class="t" style="left:799.42px;top:561.23px;font-size:10.6px;line-height:10.6px;color:#8b93a1;letter-spacing:0.257px;">10:00</span>
<span class="t" style="left:873.54px;top:561.23px;font-size:10.6px;line-height:10.6px;color:#8b93a1;letter-spacing:0.257px;">12:00</span>
<span class="t" style="left:947.67px;top:561.23px;font-size:10.6px;line-height:10.6px;color:#8b93a1;letter-spacing:0.257px;">13:00</span>
<span class="t" style="left:1021.79px;top:561.23px;font-size:10.6px;line-height:10.6px;color:#8b93a1;letter-spacing:0.257px;">15:00</span>
<span class="t" style="left:1095.92px;top:561.23px;font-size:10.6px;line-height:10.6px;color:#8b93a1;letter-spacing:0.257px;">16:00</span>
<span class="t" style="left:1170.04px;top:561.23px;font-size:10.6px;line-height:10.6px;color:#8b93a1;letter-spacing:0.257px;">17:00</span>
<span class="t" style="left:1244.17px;top:561.23px;font-size:10.6px;line-height:10.6px;color:#8b93a1;letter-spacing:0.257px;">23:00</span>
<div style="position:absolute;left:10px;top:597px;width:1298px;height:200px;background:#d2d2d2;border-radius:10px 10px 0 0"></div>
<span class="t" style="left:23.90px;top:617.15px;font-size:14px;line-height:14px;color:#111317;letter-spacing:0.172px;-webkit-text-stroke:0.6px #111317;">Top nhân viên xuất sắc</span>
<span class="t" style="left:179.60px;top:618.84px;font-size:12px;line-height:12px;color:#1046cf;letter-spacing:0.380px;">Chi tiết</span>
<div style="position:absolute;left:1208.2px;top:610.2px;width:86.8px;height:26.7px;background:#c4c6ca;border-radius:7px;"></div>
<span class="t" style="left:1218.70px;top:617.84px;font-size:12px;line-height:12px;color:#181b20;letter-spacing:0.110px;">Hôm nay</span>
<svg style="left:1276.500px;top:621px" width="9" height="6" viewBox="0 0 9 6" fill="none" stroke="#4a5059" stroke-width="1" stroke-linecap="round" stroke-linejoin="round"><path d="M1 1 L4.500 4.500 L8 1"/></svg>
<span class="t" style="left:36.90px;top:657.24px;font-size:12px;line-height:12px;color:#1046cf;letter-spacing:0.212px;">Doanh thu</span>
<span class="t" style="left:121.40px;top:657.24px;font-size:12px;line-height:12px;color:#111317;letter-spacing:-0.117px;">Số lượng</span>
<span class="t" style="left:197.20px;top:657.24px;font-size:12px;line-height:12px;color:#111317;letter-spacing:0.157px;">Hoa hồng</span>
<div style="position:absolute;left:23.5px;top:678.5px;width:1271.5px;height:1px;background:#bdbfc3;border-radius:0px;"></div>
<div style="position:absolute;left:36.9px;top:677.4px;width:57.2px;height:2px;background:#0040c8;border-radius:0px;"></div>
<svg style="left:0;top:0" width="1600" height="788" viewBox="0 0 1600 788" fill="none"><path d="M120.500 711 V788" stroke="#9fa2a7" stroke-width="1"/><path d="M263.5 711 V788" stroke="#b4b6ba" stroke-width="1" stroke-dasharray="3 2"/><path d="M405.5 711 V788" stroke="#b4b6ba" stroke-width="1" stroke-dasharray="3 2"/><path d="M547.5 711 V788" stroke="#b4b6ba" stroke-width="1" stroke-dasharray="3 2"/><path d="M689.5 711 V788" stroke="#b4b6ba" stroke-width="1" stroke-dasharray="3 2"/><path d="M832.5 711 V788" stroke="#b4b6ba" stroke-width="1" stroke-dasharray="3 2"/><path d="M974.5 711 V788" stroke="#b4b6ba" stroke-width="1" stroke-dasharray="3 2"/><path d="M1116.5 711 V788" stroke="#b4b6ba" stroke-width="1" stroke-dasharray="3 2"/><path d="M1258.5 711 V788" stroke="#b4b6ba" stroke-width="1" stroke-dasharray="3 2"/><rect x="120.600" y="735.700" width="1021.400" height="26.400" rx="5" fill="#6b98d0"/><path d="M125.600 735.700 H1014.900 V762.100 H125.600 a5 5 0 0 1 -5 -5 V740.700 a5 5 0 0 1 5 -5 Z" fill="#0040c8"/></svg>
<span class="t" style="left:72.88px;top:742.34px;font-size:12px;line-height:12px;color:#111317;letter-spacing:-0.021px;">Lê An</span>
</body></html>
